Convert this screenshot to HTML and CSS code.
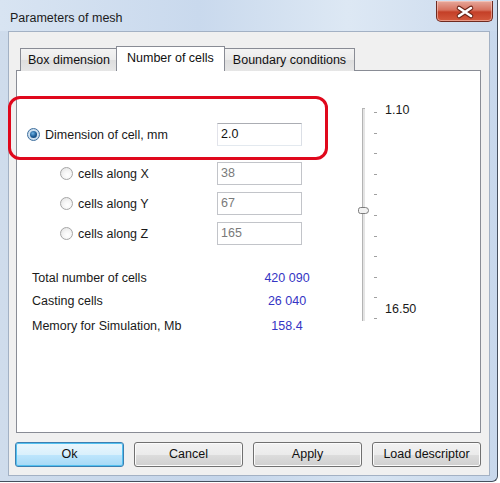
FILE: index.html
```html
<!DOCTYPE html>
<html>
<head>
<meta charset="utf-8">
<link rel="stylesheet" href="styles.css">
</head>
<body>
<div class="window">
  <div class="titlebar">
    <span class="title">Parameters of mesh</span>
    <div class="close">
      <svg width="57" height="20" viewBox="0 0 57 20">
        <path d="M22 7 L34 15 M34 7 L22 15" stroke="#6a2418" stroke-width="4.6" stroke-linecap="round" fill="none"/>
        <path d="M22 7 L34 15 M34 7 L22 15" stroke="#ffffff" stroke-width="2.6" stroke-linecap="round" fill="none"/>
      </svg>
    </div>
  </div>
  <div class="client">
    <div class="tabs">
      <div class="tab">Box dimension</div>
      <div class="tab active">Number of cells</div>
      <div class="tab wide">Boundary conditions</div>
    </div>
    <div class="panel">
      <div class="form">
        <div class="row main">
          <label class="opt"><span class="radio checked"></span>Dimension of cell, mm</label>
          <div class="input">2.0</div>
        </div>
        <div class="row sub first">
          <label class="opt"><span class="radio"></span>cells along X</label>
          <div class="input disabled">38</div>
        </div>
        <div class="row sub">
          <label class="opt"><span class="radio"></span>cells along Y</label>
          <div class="input disabled">67</div>
        </div>
        <div class="row sub">
          <label class="opt"><span class="radio"></span>cells along Z</label>
          <div class="input disabled">165</div>
        </div>
        <div class="stats">
          <span class="lbl">Total number of cells</span><span class="val">420 090</span>
          <span class="lbl">Casting cells</span><span class="val">26 040</span>
          <span class="lbl last">Memory for Simulation, Mb</span><span class="val last">158.4</span>
        </div>
      </div>
      <div class="slider">
        <div class="track"></div>
        <div class="ticks">
          <i></i><i></i><i></i><i></i><i></i><i></i><i></i><i></i><i></i><i></i><i></i>
        </div>
        <div class="labels">
          <span>1.10</span>
          <span>16.50</span>
        </div>
        <div class="thumb"></div>
      </div>
    </div>
    <div class="buttons">
      <div class="btn default">Ok</div>
      <div class="btn">Cancel</div>
      <div class="btn">Apply</div>
      <div class="btn">Load descriptor</div>
    </div>
  </div>
  <div class="highlight"></div>
</div>
</body>
</html>
```

FILE: styles.css
```css
* { box-sizing: border-box; }
html, body { margin: 0; padding: 0; background: #ffffff; }
body {
  font-family: "Liberation Sans", Arial, sans-serif;
  font-size: 12.5px;
  color: #1a1a1a;
}
.window {
  position: relative;
  width: 498px;
  height: 482px;
  border-right: 1px solid #46505e;
  border-bottom: 1px solid #46505e;
  border-bottom-right-radius: 6px;
  background: linear-gradient(to right, #cfdcec, #c4d5ea 45%, #d6e3f1 75%, #c8d8ec);
  display: flex;
  flex-direction: column;
}
.titlebar {
  height: 31px;
  flex: none;
  display: flex;
  align-items: flex-start;
  padding-left: 10px;
  background: linear-gradient(to right, #d8e4f2, #c9d9ed 40%, #dde8f4 70%, #cbdaed);
}
.title {
  font-size: 12.5px;
  line-height: 16px;
  margin-top: 10px;
  color: #1c1c1c;
}
.close {
  margin-left: auto;
  margin-right: 4px;
  margin-top: 1px;
  width: 57px;
  height: 21px;
  border: 1px solid #6f2a20;
  border-top: none;
  border-radius: 0 0 5px 5px;
  background: linear-gradient(#e6a89b, #d7725f 45%, #c43f27 55%, #d45a3e);
  box-shadow: inset 0 0 0 1px rgba(255,220,210,0.5);
}
.close svg { display: block; }
.client {
  flex: none;
  height: 445px;
  margin: 0 7px 0 8px;
  border: 1px solid #a3b1c4;
  background: #f0f0f0;
  padding: 14px 8px 0 7px;
  display: flex;
  flex-direction: column;
}
.tabs {
  display: flex;
  align-items: flex-end;
  height: 25px;
  padding-left: 4px;
  margin-bottom: -1px;
  position: relative;
  z-index: 1;
}
.tab {
  height: 23px;
  padding: 3px 7px 0 7px;
  line-height: 17px;
  border: 1px solid #898c95;
  border-bottom: none;
  border-left: none;
  background: linear-gradient(#f3f3f3, #ebebeb 50%, #dedede 50%, #e6e6e6);
  color: #111;
  white-space: nowrap;
}
.tab:first-child { border-left: 1px solid #898c95; }
.tab.wide { padding: 3px 8px 0 9px; }
.tab.active {
  height: 25px;
  padding: 1px 10px 0 10px;
  line-height: 21px;
  margin: 0 -1px 0 -2px;
  border-left: 1px solid #898c95;
  background: #ffffff;
  position: relative;
  z-index: 2;
}
.panel {
  height: 363px;
  flex: none;
  border: 1px solid #898c95;
  background: #ffffff;
  display: flex;
}
.form {
  width: 330px;
  flex: none;
  padding-top: 52px;
}
.row {
  display: grid;
  grid-template-columns: 200px 85px;
  align-items: center;
  height: 23px;
}
.row.sub { margin-top: 7px; }
.row.sub.first { margin-top: 16px; }
.row.main .opt { padding-left: 10px; }
.row.sub .opt { padding-left: 43px; }
.opt {
  display: flex;
  align-items: center;
  gap: 5px;
  color: #1a1a1a;
  white-space: nowrap;
}
.radio {
  width: 13px;
  height: 13px;
  flex: none;
  border-radius: 50%;
  border: 1px solid #8e8f8f;
  background: radial-gradient(circle at 60% 65%, #ffffff 0%, #f4f4f4 40%, #d4d4d4 100%);
  position: relative;
}
.row.sub .radio {
  border-color: #a6a6a6;
  background: radial-gradient(circle at 60% 65%, #ffffff 0%, #f6f6f6 40%, #dedede 100%);
}
.radio.checked {
  border-color: #3d6e9d;
  background: radial-gradient(circle, #e6f0f8 0%, #bcd3e8 100%);
}
.radio.checked::after {
  content: "";
  position: absolute;
  left: 2px;
  top: 2px;
  width: 7px;
  height: 7px;
  border-radius: 50%;
  background: radial-gradient(circle at 40% 35%, #6fb2e3 0%, #1f5f99 50%, #0d3561 100%);
}
.input {
  height: 23px;
  border: 1px solid #abadb3;
  border-color: #abadb3 #dbdfe6 #e3e9ef #e2e3ea;
  background: #ffffff;
  padding-left: 3px;
  line-height: 21px;
  color: #111;
}
.input.disabled {
  border-color: #c2c4c9;
  color: #7a7a7a;
}
.stats {
  margin-top: 22px;
  padding-left: 15px;
  display: grid;
  grid-template-columns: 215px 80px;
  line-height: 23px;
}
.stats .val {
  text-align: center;
  color: #3535c4;
}
.stats .last { margin-top: 2px; }
.slider {
  position: relative;
  display: flex;
  height: 220px;
  margin-top: 31px;
  padding-left: 15px;
}
.track {
  width: 3px;
  margin-top: 6px;
  margin-bottom: 1px;
  border-left: 1px solid #b4b4b4;
  border-top: 1px solid #b4b4b4;
  background: #e4e4e4;
}
.ticks {
  margin-left: 9px;
  padding: 10px 0 3px 0;
  display: flex;
  flex-direction: column;
  justify-content: space-between;
}
.ticks i {
  display: block;
  width: 3px;
  height: 1px;
  background: #a0a0a0;
}
.labels {
  margin-left: 8px;
  padding-bottom: 5px;
  display: flex;
  flex-direction: column;
  justify-content: space-between;
  line-height: 16px;
  color: #1a1a1a;
}
.thumb {
  position: absolute;
  left: 11px;
  top: 105px;
  width: 11px;
  height: 7px;
  border: 1px solid #7d7d7d;
  border-radius: 3px 4px 4px 3px;
  background: #f2f2f2;
}
.buttons {
  margin-top: 9px;
  margin-left: -1px;
  display: grid;
  grid-template-columns: repeat(4, 109px);
  column-gap: 10px;
}
.btn {
  height: 25px;
  border: 1px solid #707070;
  border-radius: 3px;
  background: linear-gradient(#f2f2f2, #ebebeb 50%, #dddddd 50%, #cfcfcf);
  box-shadow: inset 0 0 0 1px #fbfbfb;
  text-align: center;
  line-height: 23px;
  color: #111;
}
.btn.default {
  border-color: #3c7fb1;
  background: linear-gradient(#eaf6fd, #d9f0fc 50%, #bee6fd 50%, #a7d9f5);
  box-shadow: inset 0 0 0 1px #53c1f0;
}
.highlight {
  position: absolute;
  left: 8px;
  top: 96px;
  width: 320px;
  height: 64px;
  border: 3px solid #e0081c;
  border-radius: 12px;
}
```
